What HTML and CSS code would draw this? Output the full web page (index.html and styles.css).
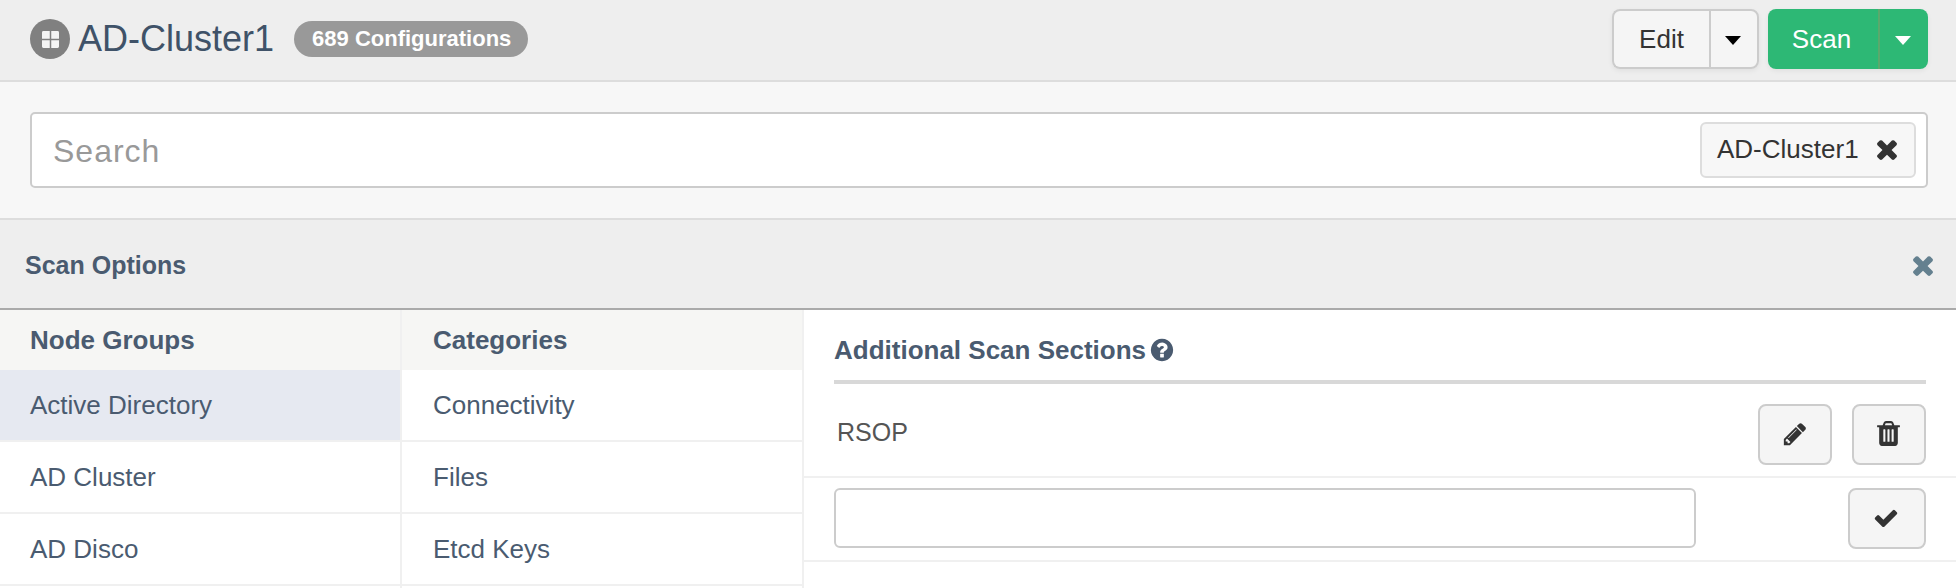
FILE: index.html
```html
<!DOCTYPE html>
<html lang="en">
<head>
  <meta charset="UTF-8" />
  <title>AD-Cluster1</title>
  <link rel="stylesheet" href="styles.css">
</head>
<body>
  <header class="topbar">
    <span class="cluster-icon">
      <svg viewBox="0 0 18 18" width="17" height="17"><path fill="#f4f4f4" d="M0 1.500Q0 0 1.500 0H8.200V8.200H0zM9.800 0h6.700Q18 0 18 1.500V8.200H9.800zM0 9.800H8.200V18H1.500Q0 18 0 16.500zM9.800 9.800H18V16.500Q18 18 16.500 18H9.800z"/></svg>
    </span>
    <h1 class="title">AD-Cluster1</h1>
    <span class="count-badge">689 Configurations</span>
    <div class="actions">
      <div class="split split-edit">
        <button class="split-main">Edit</button>
        <button class="split-toggle"><span class="caret"></span></button>
      </div>
      <div class="split split-scan">
        <button class="split-main">Scan</button>
        <button class="split-toggle"><span class="caret"></span></button>
      </div>
    </div>
  </header>

  <section class="search-section">
    <div class="search-box">
      <input class="search-input" type="text" placeholder="Search" />
      <span class="search-tag">
        AD-Cluster1
        <svg class="tag-x" viewBox="0 0 1792 1792" width="30" height="30"><path fill="currentColor" d="M1490 1322q0 40-28 68l-136 136q-28 28-68 28t-68-28l-294-294-294 294q-28 28-68 28t-68-28l-136-136q-28-28-28-68t28-68l294-294-294-294q-28-28-28-68t28-68l136-136q28-28 68-28t68 28l294 294 294-294q28-28 68-28t68 28l136 136q28 28 28 68t-28 68l-294 294 294 294q28 28 28 68z"/></svg>
      </span>
    </div>
  </section>

  <div class="options-bar">
    <span class="options-title">Scan Options</span>
    <svg class="options-close" viewBox="0 0 1792 1792" width="30" height="30"><path fill="currentColor" d="M1490 1322q0 40-28 68l-136 136q-28 28-68 28t-68-28l-294-294-294 294q-28 28-68 28t-68-28l-136-136q-28-28-28-68t28-68l294-294-294-294q-28-28-28-68t28-68l136-136q28-28 68-28t68 28l294 294 294-294q28-28 68-28t68 28l136 136q28 28 28 68t-28 68l-294 294 294 294q28 28 28 68z"/></svg>
  </div>

  <main class="panes">
    <div class="pane">
      <div class="pane-head">Node Groups</div>
      <div class="pane-item active">Active Directory</div>
      <div class="pane-item">AD Cluster</div>
      <div class="pane-item">AD Disco</div>
      <div class="pane-item"></div>
    </div>
    <div class="pane">
      <div class="pane-head">Categories</div>
      <div class="pane-item">Connectivity</div>
      <div class="pane-item">Files</div>
      <div class="pane-item">Etcd Keys</div>
      <div class="pane-item"></div>
    </div>
    <div class="sections">
      <h2 class="sections-head">
        Additional Scan Sections
        <svg viewBox="0 0 1792 1792" width="26" height="26"><path fill="currentColor" d="M1024 1376v-192q0-14-9-23t-23-9h-192q-14 0-23 9t-9 23v192q0 14 9 23t23 9h192q14 0 23-9t9-23zm256-672q0-88-55.500-163t-138.500-116-170-41q-243 0-371 213-15 24 8 42l132 100q7 6 19 6 16 0 25-12 53-68 86-92 34-24 86-24 48 0 85.500 26t37.500 59q0 38-20 61t-68 45q-63 28-115.500 86.500t-52.500 125.500v36q0 14 9 23t23 9h192q14 0 23-9t9-23q0-19 21.500-49.500t54.500-49.500q32-18 49-28.500t46-35 44.500-48 28-60.500 12.500-81zm384 192q0 209-103 385.500t-279.500 279.500-385.500 103-385.500-103-279.500-279.500-103-385.500 103-385.500 279.500-279.500 385.500-103 385.500 103 279.500 279.500 103 385.500z"/></svg>
      </h2>
      <div class="section-row">
        <span class="section-name">RSOP</span>
        <button class="icon-btn edit-btn">
          <svg viewBox="0 0 1792 1792" width="26" height="26"><path fill="currentColor" d="M491 1536l91-91-235-235-91 91v107h128v128h107zm523-928q0-22-22-22-10 0-17 7l-542 542q-7 7-7 17 0 22 22 22 10 0 17-7l542-542q7-7 7-17zm-54-192l416 416-832 832h-416v-416zm683 96q0 53-37 90l-166 166-416-416 166-165q36-38 90-38 53 0 91 38l235 234q37 39 37 91z"/></svg>
        </button>
        <button class="icon-btn">
          <svg viewBox="0 0 1792 1792" width="29" height="29"><path fill="currentColor" d="M704 1376v-704q0-14-9-23t-23-9h-64q-14 0-23 9t-9 23v704q0 14 9 23t23 9h64q14 0 23-9t9-23zm256 0v-704q0-14-9-23t-23-9h-64q-14 0-23 9t-9 23v704q0 14 9 23t23 9h64q14 0 23-9t9-23zm256 0v-704q0-14-9-23t-23-9h-64q-14 0-23 9t-9 23v704q0 14 9 23t23 9h64q14 0 23-9t9-23zm-544-992h448l-48-117q-7-9-17-11h-317q-10 2-17 11zm928 32v64q0 14-9 23t-23 9h-96v948q0 83-47 143.500t-113 60.500h-832q-66 0-113-58.500t-47-141.500v-952h-96q-14 0-23-9t-9-23v-64q0-14 9-23t23-9h309l70-167q15-37 54-63t79-26h320q40 0 79 26t54 63l70 167h309q14 0 23 9t9 23z"/></svg>
        </button>
      </div>
      <div class="section-add">
        <input class="section-input" type="text" />
        <button class="icon-btn check-btn">
          <svg viewBox="0 0 1792 1792" width="26" height="26"><path fill="currentColor" d="M1671 566q0 40-28 68l-724 724-136 136q-28 28-68 28t-68-28l-136-136-362-362q-28-28-28-68t28-68l136-136q28-28 68-28t68 28l294 295 656-657q28-28 68-28t68 28l136 136q28 28 28 68z"/></svg>
        </button>
      </div>
    </div>
  </main>
</body>
</html>
```

FILE: styles.css
```css
* {
  box-sizing: border-box;
}
html, body {
  height: 588px;
  overflow: hidden;
}
body {
  margin: 0;
  background: white;
  font-family: "Liberation Sans", Arial, sans-serif;
  font-size: 26px;
  color: #333;
}
button {
  font-family: inherit;
  font-size: 26px;
  cursor: pointer;
}

.topbar {
  height: 82px;
  display: flex;
  align-items: center;
  padding: 0 28px 2px 30px;
  background: #eeeeee;
  border-bottom: 2px solid #dddddd;
}
.cluster-icon {
  width: 40px;
  height: 40px;
  border-radius: 50%;
  background: #808080;
  display: flex;
  align-items: center;
  justify-content: center;
}
.title {
  margin: 0 0 0 8px;
  font-size: 36px;
  font-weight: normal;
  color: #3f5268;
}
.count-badge {
  margin-left: 20px;
  height: 36px;
  padding: 0 17px 0 18px;
  display: flex;
  align-items: center;
  border-radius: 18px;
  background: #999999;
  color: white;
  font-size: 22px;
  font-weight: bold;
}
.actions {
  margin-left: auto;
  display: flex;
  gap: 9px;
}
.split {
  display: flex;
  height: 60px;
  border-radius: 8px;
  box-shadow: 0 2px 5px rgba(0, 0, 0, 0.06);
}
.split button {
  height: 60px;
  padding: 0;
}
.split-edit button {
  background: #f5f5f5;
  color: #333;
  border: 2px solid #cccccc;
}
.split-edit .split-main {
  width: 97px;
  border-right: 0;
  border-radius: 8px 0 0 8px;
}
.split-edit .split-toggle {
  width: 50px;
  padding-right: 2px;
  border-radius: 0 8px 8px 0;
}
.split-scan button {
  background: #2db875;
  color: white;
  border: 0;
}
.split-scan .split-main {
  width: 110px;
  padding-right: 3px;
  border-radius: 8px 0 0 8px;
}
.split-scan .split-toggle {
  width: 50px;
  padding-right: 2px;
  border-left: 2px solid #5aa96c;
  border-radius: 0 8px 8px 0;
}
.caret {
  display: inline-block;
  vertical-align: middle;
  border-top: 9px solid black;
  border-left: 8px solid transparent;
  border-right: 8px solid transparent;
}
.split-scan .caret {
  border-top-color: white;
}

.search-section {
  height: 138px;
  padding: 30px 28px 0 30px;
  background: #f7f7f7;
  border-bottom: 2px solid #dddddd;
}
.search-box {
  height: 76px;
  display: flex;
  align-items: center;
  padding: 0 10px 0 21px;
  background: white;
  border: 2px solid #cccccc;
  border-radius: 5px;
}
.search-input {
  flex: 1;
  border: 0;
  outline: 0;
  padding: 2px 0 0;
  font-family: inherit;
  font-size: 32px;
  letter-spacing: 1px;
}
.search-input::placeholder {
  color: #999999;
}
.search-tag {
  width: 216px;
  height: 56px;
  padding: 0 0 2px 15px;
  display: flex;
  align-items: center;
  gap: 13px;
  background: #f7f7f7;
  border: 2px solid #dddddd;
  border-radius: 6px;
  color: #333;
  white-space: nowrap;
}
.tag-x {
  flex: none;
}

.options-bar {
  height: 90px;
  display: flex;
  align-items: center;
  justify-content: space-between;
  padding: 2px 18px 0 25px;
  background: #eeeeee;
  border-bottom: 2px solid #aaaaaa;
}
.options-title {
  font-weight: bold;
  font-size: 25px;
  color: #4a5b70;
}
.options-close {
  color: #64808f;
}

.panes {
  display: flex;
  height: 278px;
  overflow: hidden;
}
.pane {
  width: 402px;
  flex: none;
}
.pane-head {
  height: 60px;
  padding: 0 30px;
  line-height: 60px;
  font-weight: bold;
  color: #4a5b70;
  background: #f6f6f4;
  border-right: 2px solid #f0f0f0;
}
.pane-item {
  height: 72px;
  padding: 0 30px;
  line-height: 70px;
  color: #4a5b70;
  border-right: 2px solid #f0f0f0;
  border-bottom: 2px solid #f0f0f0;
}
.pane-item.active {
  background: #e6e9f1;
}
.pane + .pane .pane-head,
.pane + .pane .pane-item {
  padding-left: 31px;
}

.sections {
  flex: 1;
}
.sections-head {
  height: 74px;
  margin: 0 30px;
  display: flex;
  align-items: center;
  gap: 3px;
  padding-top: 10px;
  font-size: 26px;
  color: #4a5b70;
  border-bottom: 4px solid #d8d8d8;
}
.section-row {
  height: 94px;
  display: flex;
  align-items: flex-start;
  gap: 20px;
  padding: 20px 30px 0;
  border-bottom: 2px solid #f0f0f0;
}
.section-name {
  margin-right: auto;
  padding: 0 3px;
  line-height: 57px;
  font-size: 25px;
  color: #555555;
}
.section-add {
  height: 84px;
  display: flex;
  align-items: flex-start;
  justify-content: space-between;
  padding: 10px 30px 0;
  border-bottom: 2px solid #f0f0f0;
}
.section-input {
  width: 862px;
  height: 60px;
  background: white;
  border: 2px solid #cccccc;
  border-radius: 6px;
}
.icon-btn {
  width: 74px;
  height: 61px;
  padding: 0 2px 2px 0;
  display: flex;
  align-items: center;
  justify-content: center;
  background: #f5f5f5;
  color: #333;
  border: 2px solid #cccccc;
  border-radius: 8px;
}
.edit-btn {
  padding-right: 0;
}
.check-btn {
  width: 78px;
}
```
